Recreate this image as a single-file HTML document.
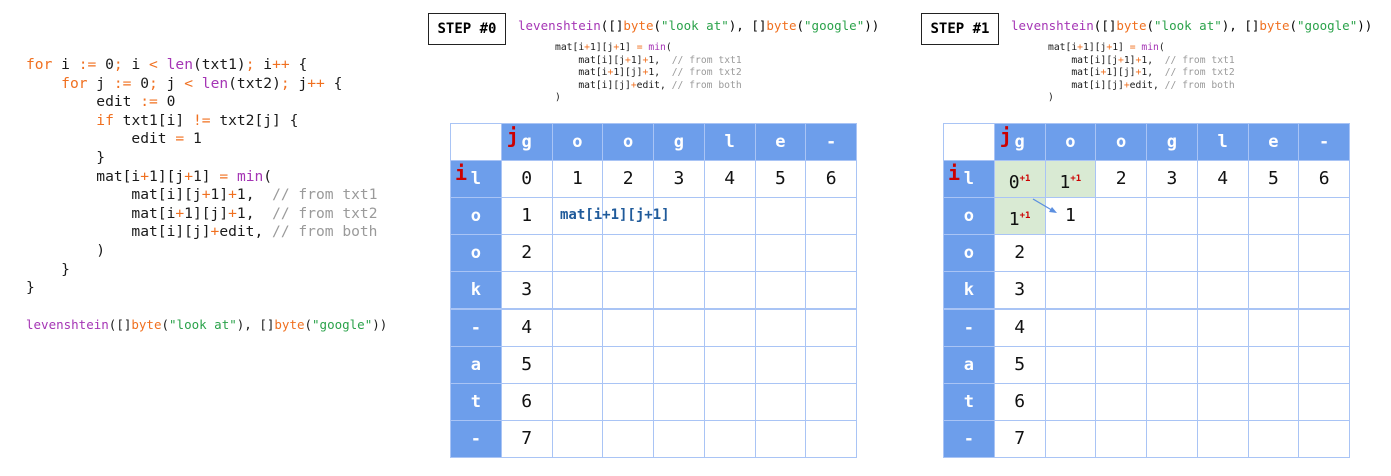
<!DOCTYPE html>
<html><head><meta charset="utf-8"><style>
body{margin:0;width:1391px;height:476px;background:#fff;position:relative;overflow:hidden;font-family:"DejaVu Sans Mono","Liberation Mono",monospace}
.code{position:absolute;left:26px;top:56px;font-size:14.6px;line-height:18.6px;white-space:pre;color:#1a1a1a}
.k{color:#f07020}.p{color:#a535b5}.g{color:#2aa24a}.c{color:#9a9a9a}
.step{position:absolute;top:13px;width:76px;height:30px;border:1.5px solid #222;font-weight:bold;font-size:14px;line-height:30px;text-align:center;font-family:"DejaVu Sans Mono",monospace}
.title{position:absolute;top:18px;font-size:12.5px;white-space:pre}
.small{position:absolute;top:42px;font-size:9.7px;line-height:12.5px;white-space:pre;color:#1a1a1a}
.tbl{position:absolute;top:123px}
.cell{position:absolute;box-sizing:border-box;border:1px solid #a9c4f5;text-align:center;font-size:18px;line-height:36px;color:#111}
.h{background:#6d9eeb;color:#fff;font-weight:bold;font-size:17px}
.gr{background:#d9ead3}
.red{color:#c00;font-weight:bold}
sup{font-size:9px;color:#c00;font-weight:bold}
</style></head><body>
<div class="code"><span class="k">for</span> i <span class="k">:=</span> 0<span class="k">;</span> i <span class="k">&lt;</span> <span class="p">len</span>(txt1)<span class="k">;</span> i<span class="k">++</span> {
    <span class="k">for</span> j <span class="k">:=</span> 0<span class="k">;</span> j <span class="k">&lt;</span> <span class="p">len</span>(txt2)<span class="k">;</span> j<span class="k">++</span> {
        edit <span class="k">:=</span> 0
        <span class="k">if</span> txt1[i] <span class="k">!=</span> txt2[j] {
            edit <span class="k">=</span> 1
        }
        mat[i<span class="k">+</span>1][j<span class="k">+</span>1] <span class="k">=</span> <span class="p">min</span>(
            mat[i][j<span class="k">+</span>1]<span class="k">+</span>1,  <span class="c">// from txt1</span>
            mat[i<span class="k">+</span>1][j]<span class="k">+</span>1,  <span class="c">// from txt2</span>
            mat[i][j]<span class="k">+</span>edit, <span class="c">// from both</span>
        )
    }
}

<span style="font-size:12.5px"><span class="p">levenshtein</span>([]<span class="k">byte</span>(<span class="g">"look at"</span>), []<span class="k">byte</span>(<span class="g">"google"</span>))</span></div>

<div class="step" style="left:428px">STEP #0</div>
<div class="step" style="left:921px">STEP #1</div>
<div class="title" style="left:518px"><span class="p">levenshtein</span>([]<span class="k">byte</span>(<span class="g">"look at"</span>), []<span class="k">byte</span>(<span class="g">"google"</span>))</div>
<div class="title" style="left:1011px"><span class="p">levenshtein</span>([]<span class="k">byte</span>(<span class="g">"look at"</span>), []<span class="k">byte</span>(<span class="g">"google"</span>))</div>
<div class="small" style="left:555px">mat[i<span class="k">+</span>1][j<span class="k">+</span>1] <span class="k">=</span> <span class="p">min</span>(
    mat[i][j<span class="k">+</span>1]<span class="k">+</span>1,  <span class="c">// from txt1</span>
    mat[i<span class="k">+</span>1][j]<span class="k">+</span>1,  <span class="c">// from txt2</span>
    mat[i][j]<span class="k">+</span>edit, <span class="c">// from both</span>
)</div>
<div class="small" style="left:1048px">mat[i<span class="k">+</span>1][j<span class="k">+</span>1] <span class="k">=</span> <span class="p">min</span>(
    mat[i][j<span class="k">+</span>1]<span class="k">+</span>1,  <span class="c">// from txt1</span>
    mat[i<span class="k">+</span>1][j]<span class="k">+</span>1,  <span class="c">// from txt2</span>
    mat[i][j]<span class="k">+</span>edit, <span class="c">// from both</span>
)</div>
<div id="t0" class="tbl" style="left:450px"></div>
<div id="t1" class="tbl" style="left:943px"></div>
<script>
var cols=["g","o","o","g","l","e","-"],rows=["l","o","o","k","-","a","t","-"];
var W=50.75,H=37.1;
function build(id,step){
 var t=document.getElementById(id),h="";
 function cell(r,c,cls,txt){h+='<div class="cell '+cls+'" style="left:'+(c*W)+'px;top:'+(r*H)+'px;width:'+(W+1)+'px;height:'+(H+1)+'px">'+txt+'</div>';}
 cell(0,0,"","");
 for(var c=0;c<7;c++)cell(0,c+1,"h",(c==0?'<span class="red" style="position:absolute;left:5px;top:-6px;font-size:20px">j</span>':'')+cols[c]);
 for(var r=0;r<8;r++){
  cell(r+1,0,"h",(r==0?'<span class="red" style="position:absolute;left:4px;top:-6px;font-size:20px">i</span>':'')+rows[r]);
  for(var c=0;c<7;c++){
   var txt="",cls="";
   if(r==0)txt=c;else if(c==0)txt=r;
   if(step==1){
    if((r==0&&c<2)||(r==1&&c==0)){cls="gr";txt+='<sup>+1</sup>';}
    if(r==1&&c==1)txt="1";
   }
   cell(r+1,c+1,cls,txt);
  }
 }
 if(step==0)h+='<div style="position:absolute;left:110px;top:'+(2*H)+'px;line-height:37px;font-size:14px;font-weight:bold;color:#1f5a9a;white-space:nowrap">mat[i+1][j+1]</div>';
 else h+='<svg style="position:absolute;left:0;top:0" width="200" height="120"><line x1="90" y1="76" x2="112" y2="89" stroke="#5b8fe0" stroke-width="1.3"/><path d="M114 90 L106 89 L109 84 Z" fill="#5b8fe0"/></svg>';
 t.innerHTML=h;
}
build("t0",0);build("t1",1);
</script>
</body></html>
